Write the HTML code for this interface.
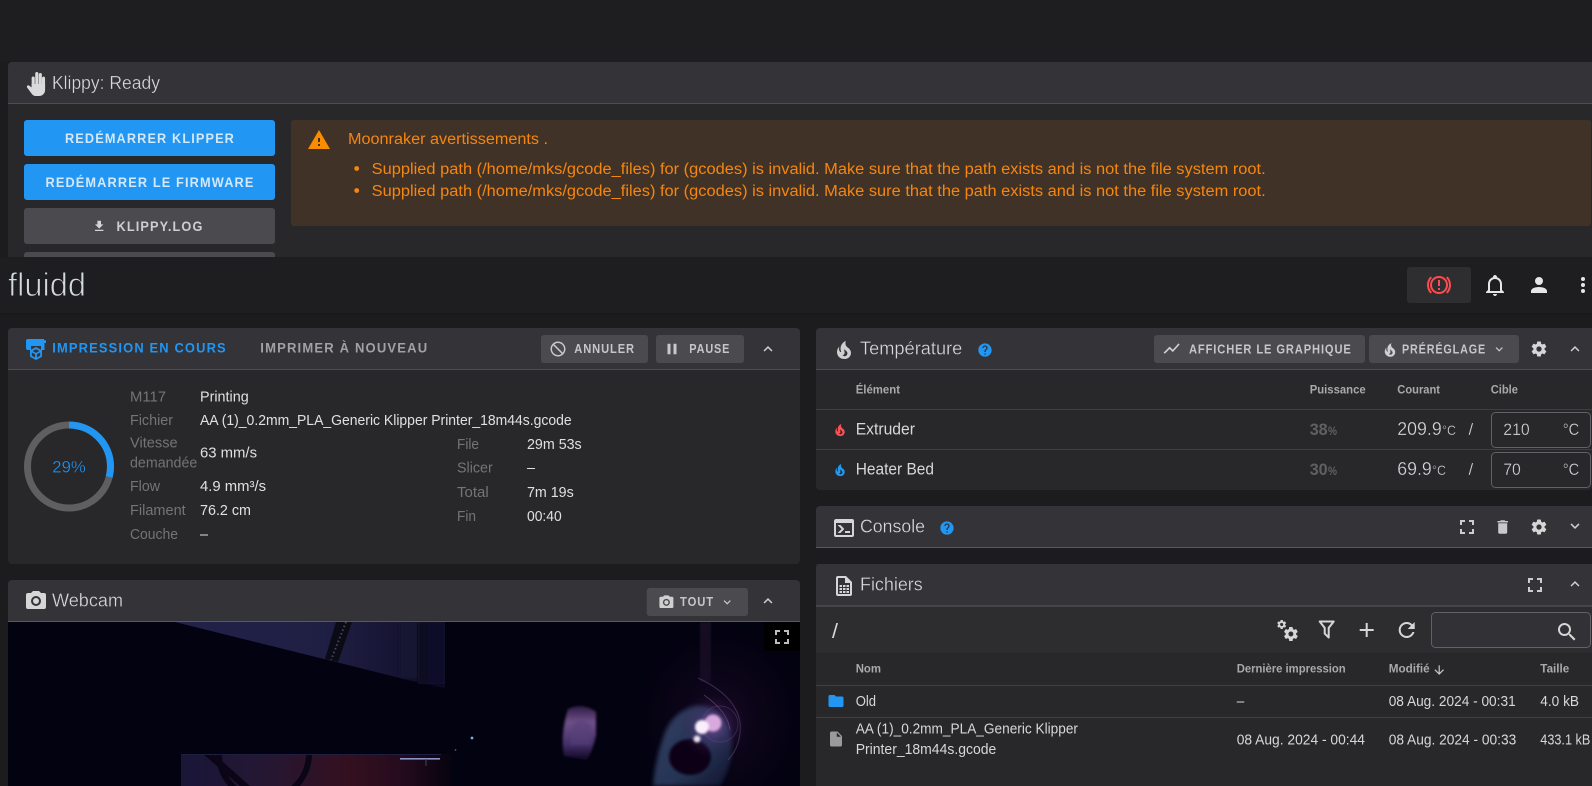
<!DOCTYPE html>
<html lang="fr"><head><meta charset="utf-8"><title>Fluidd</title>
<style>
html,body{margin:0;padding:0;background:#1c1c1e;width:1592px;height:786px;overflow:hidden}
svg{display:block}
text{font-family:"Liberation Sans",Arial,sans-serif;white-space:pre}
.title{font-size:18.5px;fill:#d6d8da;stroke:#333338;stroke-width:.3px}
.btn{font-size:12.5px;font-weight:bold;fill:#c6c6c8;letter-spacing:1px}
.btnw{font-size:13.5px;font-weight:bold;fill:#d3e8fa;letter-spacing:1.2px}
.tab{font-size:13.5px;font-weight:bold;letter-spacing:1.2px}
.lab{font-size:14.5px;fill:#747476}
.val{font-size:14.5px;fill:#dfe0e1}
.th{font-size:12px;font-weight:bold;fill:#a9a9ab}
.warn{font-size:15.5px;fill:#f5860f}
.row{font-size:14.5px;fill:#d6d7d8}
.big{font-size:18.5px;fill:#d6d9db;stroke:#28282b;stroke-width:.3px}
.pct{font-size:16.5px;font-weight:bold;fill:#606062}
</style></head>
<body>
<svg width="1592" height="786" viewBox="0 0 1592 786" xmlns="http://www.w3.org/2000/svg">
<defs>
<path id="i-chev-up" d="M7.41,15.41L12,10.83L16.59,15.41L18,14L12,8L6,14L7.41,15.41Z"/>
<path id="i-chev-dn" d="M7.41,8.58L12,13.17L16.59,8.58L18,10L12,16L6,10L7.41,8.58Z"/>
<path id="i-fire" d="M17.66 11.2C17.43 10.9 17.15 10.64 16.89 10.38C16.22 9.78 15.46 9.35 14.82 8.72C13.33 7.26 13 4.85 13.95 3C13 3.23 12.17 3.75 11.46 4.32C8.87 6.4 7.85 10.07 9.07 13.22C9.11 13.32 9.15 13.42 9.15 13.55C9.15 13.77 9 13.97 8.8 14.05C8.57 14.15 8.33 14.09 8.14 13.93C8.08 13.88 8.04 13.83 8 13.76C6.87 12.33 6.69 10.28 7.45 8.64C5.78 10 4.87 12.3 5 14.47C5.06 14.97 5.12 15.47 5.29 15.97C5.43 16.57 5.7 17.17 6 17.7C7.08 19.43 8.95 20.67 10.96 20.92C13.1 21.19 15.39 20.8 17.03 19.32C18.86 17.66 19.5 15 18.56 12.72L18.43 12.46C18.22 12 17.66 11.2 17.66 11.2M14.5 17.5C14.22 17.74 13.76 18 13.4 18.1C12.28 18.5 11.16 17.94 10.5 17.28C11.69 17 12.4 16.12 12.61 15.23C12.78 14.43 12.46 13.77 12.33 13C12.21 12.26 12.23 11.63 12.5 10.94C12.69 11.32 12.89 11.7 13.13 12C13.9 13 15.11 13.44 15.37 14.8C15.41 14.94 15.43 15.08 15.43 15.23C15.46 16.05 15.1 16.95 14.5 17.5H14.5Z"/>
<path id="i-help" d="M15.07,11.25L14.17,12.17C13.45,12.89 13,13.5 13,15H11V14.5C11,13.39 11.45,12.39 12.17,11.67L13.41,10.41C13.78,10.05 14,9.55 14,9C14,7.89 13.1,7 12,7A2,2 0 0,0 10,9H8A4,4 0 0,1 12,5A4,4 0 0,1 16,9C16,9.88 15.64,10.67 15.07,11.25M13,19H11V17H13M12,2A10,10 0 0,0 2,12A10,10 0 0,0 12,22A10,10 0 0,0 22,12C22,6.47 17.5,2 12,2Z"/>
<path id="i-cog" d="M12,15.5A3.5,3.5 0 0,1 8.5,12A3.5,3.5 0 0,1 12,8.5A3.5,3.5 0 0,1 15.5,12A3.5,3.5 0 0,1 12,15.5M19.43,12.97C19.47,12.65 19.5,12.33 19.5,12C19.5,11.67 19.47,11.34 19.43,11L21.54,9.37C21.73,9.22 21.78,8.95 21.66,8.73L19.66,5.27C19.54,5.05 19.27,4.96 19.05,5.05L16.56,6.05C16.04,5.66 15.5,5.32 14.87,5.07L14.5,2.42C14.46,2.18 14.25,2 14,2H10C9.75,2 9.54,2.18 9.5,2.42L9.13,5.07C8.5,5.32 7.96,5.66 7.44,6.05L4.95,5.05C4.73,4.96 4.46,5.05 4.34,5.27L2.34,8.73C2.21,8.95 2.27,9.22 2.46,9.37L4.57,11C4.53,11.34 4.5,11.67 4.5,12C4.5,12.33 4.53,12.65 4.57,12.97L2.46,14.63C2.27,14.78 2.21,15.05 2.34,15.27L4.34,18.73C4.46,18.95 4.73,19.03 4.95,18.95L7.44,17.94C7.96,18.34 8.5,18.68 9.13,18.93L9.5,21.58C9.54,21.82 9.75,22 10,22H14C14.25,22 14.46,21.82 14.5,21.58L14.87,18.93C15.5,18.67 16.04,18.34 16.56,17.94L19.05,18.95C19.27,19.03 19.54,18.95 19.66,18.73L21.66,15.27C21.78,15.05 21.73,14.78 21.54,14.63L19.43,12.97Z"/>
<path id="i-full" d="M5,5H10V7H7V10H5V5M14,5H19V10H17V7H14V5M17,14H19V19H14V17H17V14M10,17V19H5V14H7V17H10Z"/>
<path id="i-cam" d="M4,4H7L9,2H15L17,4H20A2,2 0 0,1 22,6V18A2,2 0 0,1 20,20H4A2,2 0 0,1 2,18V6A2,2 0 0,1 4,4M12,7A5,5 0 0,0 7,12A5,5 0 0,0 12,17A5,5 0 0,0 17,12A5,5 0 0,0 12,7M12,9A3,3 0 0,1 15,12A3,3 0 0,1 12,15A3,3 0 0,1 9,12A3,3 0 0,1 12,9Z"/>
<linearGradient id="wb1" x1="0" x2="1" y1="0" y2="0"><stop offset="0" stop-color="#22224a"/><stop offset=".55" stop-color="#1f1f44"/><stop offset=".8" stop-color="#171534"/><stop offset="1" stop-color="#0c0a22"/></linearGradient>
<linearGradient id="wb2" x1="0" x2="1" y1="0" y2="0"><stop offset="0" stop-color="#191638"/><stop offset=".3" stop-color="#241733"/><stop offset=".62" stop-color="#34101f"/><stop offset=".8" stop-color="#260c1e"/><stop offset="1" stop-color="#07030f"/></linearGradient>
<radialGradient id="halo"><stop offset="0" stop-color="#8f5cab" stop-opacity=".75"/><stop offset=".5" stop-color="#4d3072" stop-opacity=".35"/><stop offset="1" stop-color="#2a1440" stop-opacity="0"/></radialGradient>
<radialGradient id="tint"><stop offset="0" stop-color="#1f0b2c" stop-opacity=".7"/><stop offset="1" stop-color="#10061e" stop-opacity="0"/></radialGradient>
<linearGradient id="slab" x1="0" x2="0" y1="0" y2="1"><stop offset="0" stop-color="#2e1c44"/><stop offset=".3" stop-color="#6e5088"/><stop offset=".7" stop-color="#46306a"/><stop offset="1" stop-color="#0e0620"/></linearGradient>
<linearGradient id="body" x1="0" x2="1" y1="0" y2="1"><stop offset="0" stop-color="#36456a"/><stop offset=".6" stop-color="#2a3a5c"/><stop offset="1" stop-color="#111530"/></linearGradient>
<filter id="b1" x="-30%" y="-30%" width="160%" height="160%"><feGaussianBlur stdDeviation="1.2"/></filter>
<filter id="b2" x="-30%" y="-30%" width="160%" height="160%"><feGaussianBlur stdDeviation="2"/></filter>
<clipPath id="camclip"><rect x="8" y="622" width="792" height="164"/></clipPath>
</defs>

<!-- page -->
<rect width="1592" height="786" fill="#1c1c1e"/>
<rect width="1592" height="62" fill="#1e1e20"/>

<!-- Klippy card -->
<rect x="8" y="62" width="1584" height="230" rx="4" fill="#28282b"/>
<path d="M8 103V66a4 4 0 0 1 4-4H1592V103Z" fill="#333338"/>
<rect x="8" y="103" width="1584" height="1" fill="#4e4e52"/>
<g stroke="#dadada" stroke-width="3.1" stroke-linecap="round" fill="none">
<path d="M33.2 78V86M36.8 73.6V86M40.3 74.6V86M43.5 78.2V86"/>
</g>
<path fill="#dadada" d="M31.6 84H45.1V90A6 6 0 0 1 39.1 96H35.6Q33.2 96 31.6 93.6L27 87.4Q26.4 85.4 28.6 85.2L31.6 87.4Z"/>
<text class="title" x="52" y="89" textLength="108" lengthAdjust="spacingAndGlyphs">Klippy: Ready</text>

<rect x="24" y="120" width="251" height="36" rx="3" fill="#2196f3"/>
<text class="btnw" x="65" y="143" textLength="170" lengthAdjust="spacingAndGlyphs">REDÉMARRER KLIPPER</text>
<rect x="24" y="164" width="251" height="36" rx="3" fill="#2196f3"/>
<text class="btnw" x="45.5" y="187" textLength="209" lengthAdjust="spacingAndGlyphs">REDÉMARRER LE FIRMWARE</text>
<rect x="24" y="208" width="251" height="36" rx="3" fill="#4a4a4f"/>
<path transform="translate(92,219) scale(.6)" fill="#d4d4d4" d="M5,20H19V18H5M19,9H15V3H9V9H5L12,16L19,9Z"/>
<text class="btnw" style="fill:#cfcfd0" x="116.5" y="231" textLength="87" lengthAdjust="spacingAndGlyphs">KLIPPY.LOG</text>
<rect x="24" y="252" width="251" height="36" rx="3" fill="#4a4a4f"/>

<rect x="291" y="120" width="1300" height="106" rx="3" fill="#413227"/>
<path transform="translate(307,128) scale(1)" fill="#fb8c00" d="M13,14H11V10H13M13,18H11V16H13M1,21H23L12,2L1,21Z"/>
<text class="warn" x="348" y="144" textLength="200" lengthAdjust="spacingAndGlyphs">Moonraker avertissements .</text>
<circle cx="356.7" cy="168.5" r="2.4" fill="#f5860f"/>
<circle cx="356.7" cy="190.5" r="2.4" fill="#f5860f"/>
<text class="warn" x="371.7" y="174" textLength="894" lengthAdjust="spacingAndGlyphs">Supplied path (/home/mks/gcode_files) for (gcodes) is invalid. Make sure that the path exists and is not the file system root.</text>
<text class="warn" x="371.7" y="196" textLength="894" lengthAdjust="spacingAndGlyphs">Supplied path (/home/mks/gcode_files) for (gcodes) is invalid. Make sure that the path exists and is not the file system root.</text>

<!-- app bar -->
<rect x="0" y="257" width="1592" height="56" fill="#1e1e20"/>
<rect x="0" y="313" width="1592" height="2" fill="#19191b"/>
<text x="8" y="296" font-size="33" fill="#d4d9dd" stroke="#1e1e20" stroke-width=".9" textLength="78" lengthAdjust="spacingAndGlyphs">fluidd</text>
<rect x="1407" y="267" width="64" height="36" rx="3" fill="#2e2e30"/>
<path transform="translate(1427,273)" fill="#ff4a4f" d="M11,15H13V17H11V15M11,7H13V13H11V7M12,3A9,9 0 0,0 3,12A9,9 0 0,0 12,21A9,9 0 0,0 21,12A9,9 0 0,0 12,3M12,19A7,7 0 0,1 5,12A7,7 0 0,1 12,5A7,7 0 0,1 19,12A7,7 0 0,1 12,19M20.5,20.5C22.66,18.31 24,15.31 24,12C24,8.69 22.66,5.69 20.5,3.5L19,4.8C20.86,6.6 22,9.15 22,12C22,14.85 20.86,17.4 19,19.2L20.5,20.5M3.5,20.5L5,19.2C3.14,17.4 2,14.85 2,12C2,9.15 3.14,6.6 5,4.8L3.5,3.5C1.34,5.69 0,8.69 0,12C0,15.31 1.34,18.31 3.5,20.5Z"/>
<path transform="translate(1483,273)" fill="#e6e6e6" d="M10 21H14C14 22.1 13.1 23 12 23S10 22.1 10 21M21 19V20H3V19L5 17V11C5 7.9 7 5.2 10 4.3V4C10 2.9 10.9 2 12 2S14 2.9 14 4V4.3C17 5.2 19 7.9 19 11V17L21 19M17 11C17 8.2 14.8 6 12 6S7 8.2 7 11V18H17V11Z"/>
<path transform="translate(1527,273)" fill="#e6e6e6" d="M12,4A4,4 0 0,1 16,8A4,4 0 0,1 12,12A4,4 0 0,1 8,8A4,4 0 0,1 12,4M12,14C16.42,14 20,15.79 20,18V20H4V18C4,15.79 7.58,14 12,14Z"/>
<g fill="#e6e6e6"><circle cx="1583" cy="279" r="2"/><circle cx="1583" cy="285" r="2"/><circle cx="1583" cy="291" r="2"/></g>

<!-- Print panel -->
<rect x="8" y="328" width="792" height="236" rx="4" fill="#28282b"/>
<path d="M8 369V332a4 4 0 0 1 4-4H796a4 4 0 0 1 4 4V369Z" fill="#333338"/>
<rect x="8" y="369" width="792" height="1" fill="#4e4e52"/>
<g fill="#2196f3">
<path d="M26 341Q26 339 28 339H44V340.2H46V343H44.5V350H41V346H31V350H28Q26 350 26 348Z"/>
<path d="M36 347L42 350.3V356.7L36 360L30 356.7V350.3ZM36 349.2L32.6 351L36 352.9L39.4 351ZM31.8 352.4V355.7L35.1 357.5V354.2ZM40.2 352.4L36.9 354.2V357.5L40.2 355.7Z" fill-rule="evenodd"/>
</g>
<text class="tab" fill="#2196f3" x="52.3" y="352.7" textLength="174.5" lengthAdjust="spacingAndGlyphs">IMPRESSION EN COURS</text>
<text class="tab" fill="#a2a2a4" x="260.3" y="352.7" textLength="168" lengthAdjust="spacingAndGlyphs">IMPRIMER À NOUVEAU</text>
<rect x="541" y="335" width="107" height="28" rx="3" fill="#4a4a4f"/>
<path transform="translate(549,340) scale(.75)" fill="#c9c9ca" d="M12 2C17.5 2 22 6.5 22 12S17.5 22 12 22 2 17.5 2 12 6.5 2 12 2M12 4C10.1 4 8.4 4.6 7.1 5.7L18.3 16.9C19.3 15.5 20 13.8 20 12C20 7.6 16.4 4 12 4M16.9 18.3L5.7 7.1C4.6 8.4 4 10.1 4 12C4 16.4 7.6 20 12 20C13.9 20 15.6 19.4 16.9 18.3Z"/>
<text class="btn" x="574.3" y="353" textLength="60.7" lengthAdjust="spacingAndGlyphs">ANNULER</text>
<rect x="656" y="335" width="88" height="28" rx="3" fill="#4a4a4f"/>
<path transform="translate(663,340) scale(.75)" fill="#c9c9ca" d="M14,19H18V5H14M6,19H10V5H6V19Z"/>
<text class="btn" x="689.3" y="353" textLength="41" lengthAdjust="spacingAndGlyphs">PAUSE</text>
<use href="#i-chev-up" transform="translate(759,340) scale(.75)" fill="#d0d0d0"/>

<circle cx="69" cy="466.5" r="41.5" fill="none" stroke="#5f5f61" stroke-width="7"/>
<circle cx="69" cy="466.5" r="41.5" fill="none" stroke="#2196f3" stroke-width="7" stroke-dasharray="75.6 185.2" transform="rotate(-90 69 466.5)"/>
<text x="52.3" y="472.5" font-size="17" fill="#2196f3" stroke="#28282b" stroke-width=".3" textLength="33.4" lengthAdjust="spacingAndGlyphs">29%</text>

<text class="lab" x="130" y="401.3" textLength="36" lengthAdjust="spacingAndGlyphs">M117</text>
<text class="val" x="200" y="401.3" textLength="48.7" lengthAdjust="spacingAndGlyphs">Printing</text>
<text class="lab" x="130" y="425" textLength="43" lengthAdjust="spacingAndGlyphs">Fichier</text>
<text class="val" x="200" y="425" textLength="371.7" lengthAdjust="spacingAndGlyphs">AA (1)_0.2mm_PLA_Generic Klipper Printer_18m44s.gcode</text>
<text class="lab" x="130" y="447.5" textLength="47.7" lengthAdjust="spacingAndGlyphs">Vitesse</text>
<text class="lab" x="130" y="467.5" textLength="67.3" lengthAdjust="spacingAndGlyphs">demandée</text>
<text class="val" x="200" y="457.5" textLength="57" lengthAdjust="spacingAndGlyphs">63 mm/s</text>
<text class="lab" x="130" y="491" textLength="30" lengthAdjust="spacingAndGlyphs">Flow</text>
<text class="val" x="200" y="491" textLength="66" lengthAdjust="spacingAndGlyphs">4.9 mm³/s</text>
<text class="lab" x="130" y="515" textLength="55.7" lengthAdjust="spacingAndGlyphs">Filament</text>
<text class="val" x="200" y="515" textLength="51" lengthAdjust="spacingAndGlyphs">76.2 cm</text>
<text class="lab" x="130" y="539" textLength="48" lengthAdjust="spacingAndGlyphs">Couche</text>
<text class="val" x="200" y="539" textLength="8" lengthAdjust="spacingAndGlyphs">–</text>

<text class="lab" x="457" y="449" textLength="22" lengthAdjust="spacingAndGlyphs">File</text>
<text class="val" x="527" y="449" textLength="54.7" lengthAdjust="spacingAndGlyphs">29m 53s</text>
<text class="lab" x="457" y="472.5" textLength="35.7" lengthAdjust="spacingAndGlyphs">Slicer</text>
<text class="val" x="527" y="472.5" textLength="8" lengthAdjust="spacingAndGlyphs">–</text>
<text class="lab" x="457" y="497" textLength="31.7" lengthAdjust="spacingAndGlyphs">Total</text>
<text class="val" x="527" y="497" textLength="46.7" lengthAdjust="spacingAndGlyphs">7m 19s</text>
<text class="lab" x="457" y="521" textLength="19" lengthAdjust="spacingAndGlyphs">Fin</text>
<text class="val" x="527" y="521" textLength="34.7" lengthAdjust="spacingAndGlyphs">00:40</text>

<!-- Webcam panel -->
<path d="M8 622V584a4 4 0 0 1 4-4H796a4 4 0 0 1 4 4V622Z" fill="#333338"/>
<rect x="8" y="621" width="792" height="1" fill="#5a5a5e"/>
<use href="#i-cam" transform="translate(24,589)" fill="#d6d6d6"/>
<text class="title" x="52" y="606.7" textLength="71" lengthAdjust="spacingAndGlyphs">Webcam</text>
<rect x="646.7" y="588" width="101.3" height="28" rx="3" fill="#4a4a4f"/>
<use href="#i-cam" transform="translate(658,594) scale(.7)" fill="#cfcfd0"/>
<text class="btn" x="680" y="606" textLength="34" lengthAdjust="spacingAndGlyphs">TOUT</text>
<use href="#i-chev-dn" transform="translate(720,595) scale(.6)" fill="#c9c9ca"/>
<use href="#i-chev-up" transform="translate(759,592) scale(.75)" fill="#d0d0d0"/>

<g clip-path="url(#camclip)">
<rect x="8" y="622" width="792" height="164" fill="#030210"/>
<polygon points="175,622 408,680 445,688 445,622" fill="url(#wb1)"/>
<rect x="400" y="622" width="18" height="56" fill="#151331" filter="url(#b1)"/>
<rect x="418" y="622" width="10" height="62" fill="#0a0920" filter="url(#b1)"/>
<rect x="428" y="622" width="17" height="62" fill="#100e2a" filter="url(#b1)"/>
<rect x="445" y="622" width="60" height="66" fill="#030210"/>
<polygon points="336,622 352,622 338,662 325,659" fill="#0b0b16"/>
<path d="M346 622L331 660" stroke="#44445a" stroke-width="2" stroke-dasharray="1.5 2.5" fill="none"/>
<rect x="181" y="754" width="270" height="32" fill="url(#wb2)"/>
<path d="M216 754A46 46 0 0 0 312 754L306 754A40 40 0 0 1 222 754Z" fill="#0a0618"/>
<polygon points="203,754 214,754 250,786 240,786" fill="#0a0618"/>
<rect x="181" y="754" width="260" height="1" fill="#201e40"/>
<rect x="400" y="758" width="40" height="1.6" fill="#8a92cc"/>
<rect x="425.5" y="759" width="1" height="7" fill="#445"/>
<circle cx="472" cy="738" r="1.4" fill="#6cb4de"/>
<circle cx="455.5" cy="750" r=".9" fill="#46608a"/>
<rect x="700" y="622" width="11" height="60" fill="#140820" filter="url(#b1)"/>
<ellipse cx="720" cy="720" rx="85" ry="95" fill="url(#tint)"/>
<path d="M568 709Q583 702 596 712L596 735Q593 750 587 760L564 756Q560 735 568 709Z" fill="url(#slab)" filter="url(#b1)"/>
<path d="M572 726Q580 714 591 726L590 745L570 745Z" fill="#574078" opacity=".6" filter="url(#b1)"/>
<path d="M653 786Q655 760 664 735Q672 712 695 706Q720 704 730 730Q736 760 720 786Z" fill="url(#body)" filter="url(#b2)" opacity=".9"/>
<ellipse cx="690" cy="757" rx="21" ry="18" fill="#080318" filter="url(#b1)"/>
<ellipse cx="712" cy="726" rx="34" ry="32" fill="url(#halo)"/>
<path d="M698 678Q735 695 740 722Q742 745 728 760" fill="none" stroke="#5f4a78" stroke-width="1" opacity=".55"/>
<path d="M704 695Q728 712 730 730" fill="none" stroke="#84689c" stroke-width=".8" opacity=".5"/>
<circle cx="720" cy="724" r="18" fill="none" stroke="#7a5898" stroke-width=".8" opacity=".4"/>
<circle cx="713" cy="723" r="8.5" fill="#d9a8de" filter="url(#b1)"/>
<circle cx="702" cy="727" r="7" fill="#fbeefc" filter="url(#b1)"/>
<circle cx="697" cy="739" r="3.5" fill="#f0e4f2" filter="url(#b1)"/>
<rect x="764" y="622" width="36" height="29" fill="#000"/>
<use href="#i-full" transform="translate(770,625)" fill="#bdbdbd"/>
</g>

<!-- Temperature panel -->
<rect x="816" y="328" width="776" height="162" rx="4" fill="#28282b"/>
<path d="M816 369V332a4 4 0 0 1 4-4H1592V369Z" fill="#333338"/>
<rect x="816" y="369" width="776" height="1" fill="#4e4e52"/>
<use href="#i-fire" transform="translate(832,338)" fill="#cfcfcf"/>
<text class="title" x="860" y="354.5" textLength="102.3" lengthAdjust="spacingAndGlyphs">Température</text>
<use href="#i-help" transform="translate(977,342) scale(.667)" fill="#2196f3"/>
<rect x="1154" y="335" width="211" height="28" rx="3" fill="#4a4a4f"/>
<path transform="translate(1162,339) scale(.8)" fill="#d0d0d0" d="M3.5,18.49L9.5,12.48L13.5,16.48L22,6.92L20.59,5.51L13.5,13.48L9.5,9.48L2,16.99L3.5,18.49Z"/>
<text class="btn" x="1189" y="353.3" textLength="162.7" lengthAdjust="spacingAndGlyphs">AFFICHER LE GRAPHIQUE</text>
<rect x="1369" y="335" width="150" height="28" rx="3" fill="#4a4a4f"/>
<use href="#i-fire" transform="translate(1381,341) scale(.75)" fill="#d0d0d0"/>
<text class="btn" x="1402" y="353.3" textLength="84" lengthAdjust="spacingAndGlyphs">PRÉRÉGLAGE</text>
<use href="#i-chev-dn" transform="translate(1492,342) scale(.6)" fill="#c9c9ca"/>
<use href="#i-cog" transform="translate(1530,340) scale(.75)" fill="#d6d6d6"/>
<use href="#i-chev-up" transform="translate(1566,340) scale(.75)" fill="#d0d0d0"/>
<text class="th" x="855.7" y="393.3" textLength="44.3" lengthAdjust="spacingAndGlyphs">Élément</text>
<text class="th" x="1309.7" y="393.3" textLength="56" lengthAdjust="spacingAndGlyphs">Puissance</text>
<text class="th" x="1397.3" y="393.3" textLength="42.7" lengthAdjust="spacingAndGlyphs">Courant</text>
<text class="th" x="1490.7" y="393.3" textLength="27.3" lengthAdjust="spacingAndGlyphs">Cible</text>
<rect x="816" y="409" width="776" height="1" fill="#3f3f43"/>
<rect x="816" y="449" width="776" height="1" fill="#3f3f43"/>
<use href="#i-fire" transform="translate(832,422) scale(.67)" fill="#ff4f54"/>
<text class="row" style="font-size:16.5px" x="855.7" y="434.3" textLength="59.3" lengthAdjust="spacingAndGlyphs">Extruder</text>
<use href="#i-fire" transform="translate(832,462) scale(.67)" fill="#1e9cf5"/>
<text class="row" style="font-size:16.5px" x="855.7" y="474.3" textLength="78.3" lengthAdjust="spacingAndGlyphs">Heater Bed</text>

<text class="pct" x="1309.7" y="435" textLength="18" lengthAdjust="spacingAndGlyphs">38</text>
<text class="pct" style="font-size:12px" x="1328" y="435" textLength="9" lengthAdjust="spacingAndGlyphs">%</text>
<text class="pct" x="1309.7" y="475" textLength="18" lengthAdjust="spacingAndGlyphs">30</text>
<text class="pct" style="font-size:12px" x="1328" y="475" textLength="9" lengthAdjust="spacingAndGlyphs">%</text>
<text class="big" x="1397.3" y="435" textLength="44.4" lengthAdjust="spacingAndGlyphs">209.9</text>
<text class="big" style="font-size:14px" x="1442" y="435" textLength="14" lengthAdjust="spacingAndGlyphs">°C</text>
<text class="big" x="1468.5" y="435" style="font-size:17px">/</text>
<text class="big" x="1397.3" y="475" textLength="34.4" lengthAdjust="spacingAndGlyphs">69.9</text>
<text class="big" style="font-size:14px" x="1432" y="475" textLength="14" lengthAdjust="spacingAndGlyphs">°C</text>
<text class="big" x="1468.5" y="475" style="font-size:17px">/</text>
<rect x="1491.5" y="412.5" width="99" height="35" rx="4" fill="none" stroke="#626266"/>
<text class="big" style="font-size:16.5px" x="1503.3" y="435" textLength="26.4" lengthAdjust="spacingAndGlyphs">210</text>
<text class="big" style="font-size:16.5px" x="1562.7" y="435" textLength="16.5" lengthAdjust="spacingAndGlyphs">°C</text>
<rect x="1491.5" y="452.5" width="99" height="35" rx="4" fill="none" stroke="#626266"/>
<text class="big" style="font-size:16.5px" x="1503.3" y="475" textLength="17.5" lengthAdjust="spacingAndGlyphs">70</text>
<text class="big" style="font-size:16.5px" x="1562.7" y="475" textLength="16.5" lengthAdjust="spacingAndGlyphs">°C</text>

<!-- Console panel -->
<path d="M816 548V510a4 4 0 0 1 4-4H1592V548Z" fill="#333338"/>
<rect x="816" y="547" width="776" height="1" fill="#5a5a5e"/>
<path transform="translate(832,516)" fill="#d6d6d6" d="M20,19V7H4V19H20M20,3A2,2 0 0,1 22,5V19A2,2 0 0,1 20,21H4A2,2 0 0,1 2,19V5C2,3.89 2.9,3 4,3H20M13,17V15H18V17H13M9.58,13L5.57,9H8.4L11.7,12.3C12.09,12.69 12.09,13.33 11.7,13.72L8.42,17H5.59L9.58,13Z"/>
<text class="title" x="860" y="532.7" textLength="65" lengthAdjust="spacingAndGlyphs">Console</text>
<use href="#i-help" transform="translate(939,520) scale(.667)" fill="#2196f3"/>
<use href="#i-full" transform="translate(1455,515)" fill="#cdcdcd"/>
<path transform="translate(1493.7,518) scale(.75)" fill="#c9c9ca" d="M19,4H15.5L14.5,3H9.5L8.5,4H5V6H19M6,19A2,2 0 0,0 8,21H16A2,2 0 0,0 18,19V7H6V19Z"/>
<use href="#i-cog" transform="translate(1530,518) scale(.75)" fill="#d6d6d6"/>
<use href="#i-chev-dn" transform="translate(1566,517) scale(.75)" fill="#d0d0d0"/>

<!-- Files panel -->
<rect x="816" y="564" width="776" height="222" fill="#28282b"/>
<path d="M816 606V568a4 4 0 0 1 4-4H1592V606Z" fill="#333338"/>
<rect x="816" y="605.5" width="776" height="1" fill="#5a5a5e"/>
<path fill="#d6d6d6" fill-rule="evenodd" d="M838 576H846L852 582V594a2 2 0 0 1-2 2H838a2 2 0 0 1-2-2V578a2 2 0 0 1 2-2ZM838 578V594H850V583H845V578ZM839.5 585H842V587H839.5ZM843 585H845.5V587H843ZM846.5 585H849V587H846.5ZM839.5 588H842V590H839.5ZM843 588H845.5V590H843ZM846.5 588H849V590H846.5ZM839.5 591H842V593H839.5ZM843 591H845.5V593H843ZM846.5 591H849V593H846.5Z"/>
<text class="title" x="860" y="590.7" textLength="62.7" lengthAdjust="spacingAndGlyphs">Fichiers</text>
<use href="#i-full" transform="translate(1523,573)" fill="#cdcdcd"/>
<use href="#i-chev-up" transform="translate(1566,575) scale(.75)" fill="#d0d0d0"/>

<rect x="816" y="606.5" width="776" height="47" fill="#2d2d30"/>
<rect x="816" y="653" width="776" height="1" fill="#252527"/>
<text x="832" y="638" font-size="20" fill="#d8d8d8" textLength="6" lengthAdjust="spacingAndGlyphs">/</text>
<path transform="translate(1275,618)" fill="#d6d6d6" d="M15.9,18.45C17.25,18.45 18.35,17.35 18.35,16C18.35,14.65 17.25,13.55 15.9,13.55C14.54,13.55 13.45,14.65 13.45,16C13.45,17.35 14.54,18.45 15.9,18.45M21.1,16.68L22.58,17.84C22.71,17.95 22.75,18.13 22.66,18.29L21.26,20.71C21.17,20.86 21,20.92 20.83,20.86L19.09,20.16C18.73,20.44 18.33,20.67 17.91,20.85L17.64,22.7C17.62,22.87 17.47,23 17.3,23H14.5C14.32,23 14.18,22.87 14.15,22.7L13.89,20.85C13.46,20.67 13.07,20.44 12.71,20.16L10.96,20.86C10.81,20.92 10.62,20.86 10.54,20.71L9.14,18.29C9.05,18.13 9.09,17.95 9.22,17.84L10.7,16.68L10.65,16L10.7,15.31L9.22,14.16C9.09,14.05 9.05,13.86 9.14,13.71L10.54,11.29C10.62,11.13 10.81,11.07 10.96,11.13L12.71,11.84C13.07,11.56 13.46,11.32 13.89,11.15L14.15,9.29C14.18,9.13 14.32,9 14.5,9H17.3C17.47,9 17.62,9.13 17.64,9.29L17.91,11.15C18.33,11.32 18.73,11.56 19.09,11.84L20.83,11.13C21,11.07 21.17,11.13 21.26,11.29L22.66,13.71C22.75,13.86 22.71,14.05 22.58,14.16L21.1,15.31L21.15,16L21.1,16.68M6.69,8.07C7.56,8.07 8.26,7.37 8.26,6.5C8.26,5.63 7.56,4.92 6.69,4.92A1.58,1.58 0 0,0 5.11,6.5C5.11,7.37 5.82,8.07 6.69,8.07M10.03,6.94L11,7.68C11.07,7.75 11.09,7.87 11.03,7.97L10.13,9.53C10.08,9.63 9.96,9.67 9.86,9.63L8.74,9.18L8,9.62L7.81,10.81C7.79,10.92 7.7,11 7.59,11H5.79C5.67,11 5.58,10.92 5.56,10.81L5.4,9.62L4.64,9.18L3.5,9.63C3.41,9.67 3.3,9.63 3.24,9.53L2.34,7.97C2.28,7.87 2.31,7.75 2.39,7.68L3.34,6.94L3.31,6.5L3.34,6.06L2.39,5.32C2.31,5.25 2.28,5.13 2.34,5.03L3.24,3.47C3.3,3.37 3.41,3.33 3.5,3.37L4.63,3.82L5.4,3.38L5.56,2.19C5.58,2.08 5.67,2 5.79,2H7.59C7.7,2 7.79,2.08 7.81,2.19L8,3.38L8.74,3.82L9.86,3.37C9.96,3.33 10.08,3.37 10.13,3.47L11.03,5.03C11.09,5.13 11.07,5.25 11,5.32L10.03,6.06L10.06,6.5L10.03,6.94Z"/>
<path transform="translate(1314.7,617.5)" fill="#d6d6d6" d="M15,19.88C15.04,20.18 14.94,20.5 14.71,20.71C14.32,21.1 13.69,21.1 13.3,20.71L9.29,16.7C9.06,16.47 8.96,16.16 9,15.87V10.75L4.21,4.62C3.87,4.19 3.95,3.56 4.38,3.22C4.57,3.08 4.78,3 5,3V3H19V3C19.22,3 19.43,3.08 19.62,3.22C20.05,3.56 20.13,4.19 19.79,4.62L15,10.75V19.88M7.04,5L11,10.06V15.58L13,17.58V10.05L16.96,5H7.04Z"/>
<path transform="translate(1354.7,618)" fill="#d6d6d6" d="M19,13H13V19H11V13H5V11H11V5H13V11H19V13Z"/>
<path transform="translate(1394.7,618)" fill="#d6d6d6" d="M17.65,6.35C16.2,4.9 14.21,4 12,4A8,8 0 0,0 4,12A8,8 0 0,0 12,20C15.73,20 18.84,17.45 19.73,14H17.65C16.83,16.33 14.61,18 12,18A6,6 0 0,1 6,12A6,6 0 0,1 12,6C13.66,6 15.14,6.69 16.22,7.78L13,11H20V4L17.65,6.35Z"/>
<rect x="1431.5" y="612.5" width="159" height="35" rx="4" fill="#323236" stroke="#626266"/>
<path transform="translate(1555,620)" fill="#d6d6d6" d="M9.5,3A6.5,6.5 0 0,1 16,9.5C16,11.11 15.41,12.59 14.44,13.73L14.71,14H15.5L20.5,19L19,20.5L14,15.5V14.71L13.73,14.44C12.59,15.41 11.11,16 9.5,16A6.5,6.5 0 0,1 3,9.5A6.5,6.5 0 0,1 9.5,3M9.5,5C7,5 5,7 5,9.5C5,12 7,14 9.5,14C12,14 14,12 14,9.5C14,7 12,5 9.5,5Z"/>

<text class="th" x="855.7" y="672.7" textLength="25.3" lengthAdjust="spacingAndGlyphs">Nom</text>
<text class="th" x="1236.7" y="672.7" textLength="109" lengthAdjust="spacingAndGlyphs">Dernière impression</text>
<text class="th" x="1388.7" y="672.7" textLength="41" lengthAdjust="spacingAndGlyphs">Modifié</text>
<path transform="translate(1432,663) scale(.6)" fill="#c9c9ca" d="M11,4H13V16L18.5,10.5L19.92,11.92L12,19.84L4.08,11.92L5.5,10.5L11,16V4Z"/>
<text class="th" x="1540.3" y="672.7" textLength="29" lengthAdjust="spacingAndGlyphs">Taille</text>
<rect x="816" y="685" width="776" height="1" fill="#3f3f43"/>
<rect x="816" y="717" width="776" height="1" fill="#3f3f43"/>
<path transform="translate(827,692) scale(.75)" fill="#2196f3" d="M10,4H4C2.89,4 2,4.89 2,6V18A2,2 0 0,0 4,20H20A2,2 0 0,0 22,18V8C22,6.89 21.1,6 20,6H12L10,4Z"/>
<text class="row" x="855.7" y="706" textLength="20.3" lengthAdjust="spacingAndGlyphs">Old</text>
<text class="row" x="1236.7" y="706" textLength="7.5" lengthAdjust="spacingAndGlyphs">–</text>
<text class="row" x="1388.7" y="706" textLength="127" lengthAdjust="spacingAndGlyphs">08 Aug. 2024 - 00:31</text>
<text class="row" x="1540.3" y="706" textLength="38.7" lengthAdjust="spacingAndGlyphs">4.0 kB</text>
<path transform="translate(827,730) scale(.75)" fill="#9a9a9c" d="M13,9V3.5L18.5,9M6,2C4.89,2 4,2.89 4,4V20A2,2 0 0,0 6,22H18A2,2 0 0,0 20,20V8L14,2H6Z"/>
<text class="row" x="855.7" y="733.3" textLength="222.3" lengthAdjust="spacingAndGlyphs">AA (1)_0.2mm_PLA_Generic Klipper</text>
<text class="row" x="855.7" y="754" textLength="140.6" lengthAdjust="spacingAndGlyphs">Printer_18m44s.gcode</text>
<text class="row" x="1236.7" y="744.7" textLength="128.3" lengthAdjust="spacingAndGlyphs">08 Aug. 2024 - 00:44</text>
<text class="row" x="1388.7" y="744.7" textLength="127.6" lengthAdjust="spacingAndGlyphs">08 Aug. 2024 - 00:33</text>
<text class="row" x="1540.3" y="744.7" textLength="50" lengthAdjust="spacingAndGlyphs">433.1 kB</text>
</svg>
</body></html>
